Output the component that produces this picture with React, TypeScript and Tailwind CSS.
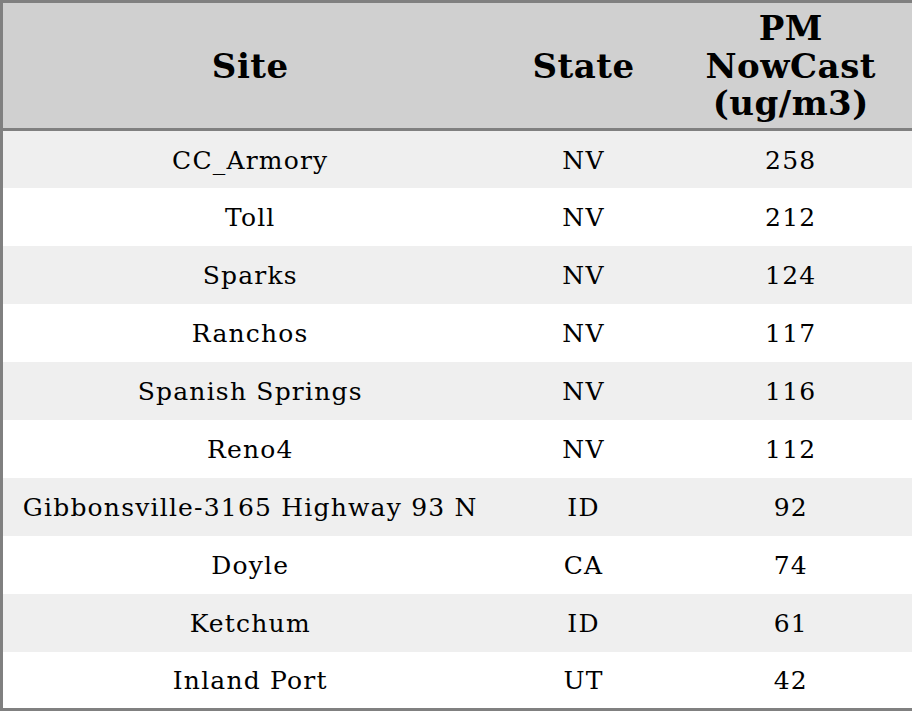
const rows = [
  { site: "CC_Armory", state: "NV", pm: 258 },
  { site: "Toll", state: "NV", pm: 212 },
  { site: "Sparks", state: "NV", pm: 124 },
  { site: "Ranchos", state: "NV", pm: 117 },
  { site: "Spanish Springs", state: "NV", pm: 116 },
  { site: "Reno4", state: "NV", pm: 112 },
  { site: "Gibbonsville-3165 Highway 93 N", state: "ID", pm: 92 },
  { site: "Doyle", state: "CA", pm: 74 },
  { site: "Ketchum", state: "ID", pm: 61 },
  { site: "Inland Port", state: "UT", pm: 42 },
];

export default function App() {
  return (
    <div className="w-[912px] h-[711px] bg-white font-['DejaVu_Serif',serif] text-black">
      <table className="w-[912px] border-collapse border-[3px] border-[#808080] table-fixed">
        <colgroup>
          <col className="w-[496px]" />
          <col className="w-[172px]" />
          <col className="w-[244px]" />
        </colgroup>
        <thead>
          <tr className="bg-[#d0d0d0] h-[128px] border-b-[3px] border-[#808080]">
            <th className="text-[34px] tracking-[0.5px] font-bold text-center align-middle pt-[2px]">Site</th>
            <th className="text-[34px] tracking-[0.5px] font-bold text-center align-middle pt-[2px]">State</th>
            <th className="text-[34px] tracking-[0.5px] font-bold text-center align-middle leading-[37.5px] pt-[2px]">
              PM
              <br />
              NowCast
              <br />
              (ug/m3)
            </th>
          </tr>
        </thead>
        <tbody>
          {rows.map((r, i) => (
            <tr key={i} className={`h-[58px] ${i % 2 === 0 ? "bg-[#efefef]" : "bg-white"}`}>
              <td className="text-[25px] tracking-[1.2px] text-center align-middle pt-[2px]">{r.site}</td>
              <td className="text-[25px] tracking-[1.2px] text-center align-middle pt-[2px]">{r.state}</td>
              <td className="text-[25px] tracking-[1.2px] text-center align-middle pt-[2px]">{r.pm}</td>
            </tr>
          ))}
        </tbody>
      </table>
    </div>
  );
}
